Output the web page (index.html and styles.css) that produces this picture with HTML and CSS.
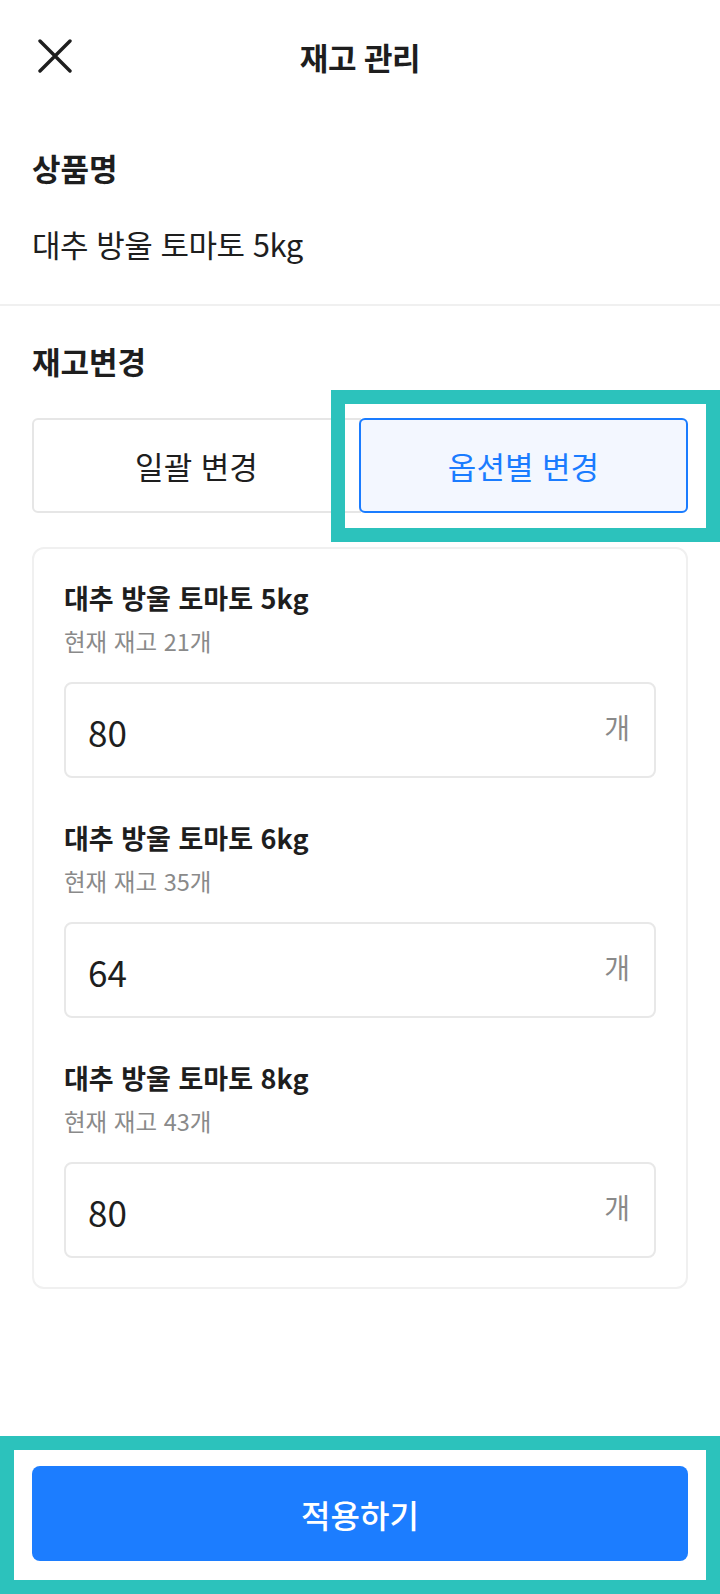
FILE: index.html
```html
<!doctype html>
<html lang="ko">
<head>
<meta charset="UTF-8">
<title>재고 관리</title>
<link rel="stylesheet" href="styles.css">
</head>
<body>
<div class="page">
	<header class="top">
		<span class="btn-close">
			<svg width="34" height="34" viewBox="0 0 34 34"><path d="M2 2L32 32M32 2L2 32" stroke="#1e1e1e" stroke-width="3.4" stroke-linecap="round" fill="none"/></svg>
		</span>
		<h1>재고 관리</h1>
		<span></span>
	</header>

	<section class="info">
		<h2>상품명</h2>
		<p class="name">대추 방울 토마토 5kg</p>
	</section>

	<section class="stock">
		<h2>재고변경</h2>
		<div class="tabs">
			<span class="tab">일괄 변경</span>
			<span class="tab on">옵션별 변경<i class="mark mark-tab"></i></span>
		</div>

		<div class="card">
			<div class="item">
				<h3>대추 방울 토마토 5kg</h3>
				<p class="now">현재 재고 21개</p>
				<label class="field"><input type="text" value="80"><span>개</span></label>
			</div>
			<div class="item">
				<h3>대추 방울 토마토 6kg</h3>
				<p class="now">현재 재고 35개</p>
				<label class="field"><input type="text" value="64"><span>개</span></label>
			</div>
			<div class="item">
				<h3>대추 방울 토마토 8kg</h3>
				<p class="now">현재 재고 43개</p>
				<label class="field"><input type="text" value="80"><span>개</span></label>
			</div>
		</div>
	</section>

	<footer class="bottom">
		<button class="btn-apply">적용하기</button>
		<i class="mark"></i>
	</footer>
</div>
</body>
</html>
```

FILE: styles.css
```css
*{ margin:0; padding:0; box-sizing:border-box;}
body{
	font-family:"Noto Sans CJK KR","Noto Sans",sans-serif;
	color:#1e1e1e;
	background:#fff;
}
.page{
	display:flex;
	flex-direction:column;
	width:720px;
	height:1594px;
}
/* 상단 */
.top{
	display:grid;
	grid-template-columns:1fr auto 1fr;
	align-items:center;
	height:112px;
	padding:0 38px;
}
.btn-close{
	display:flex;
	width:34px;
	height:34px;
	cursor:pointer;
}
.top h1{
	font-size:31px;
	font-weight:700;
	line-height:40px;
	letter-spacing:-0.5px;
	padding-top:1px;
}
h2{
	font-size:31px;
	font-weight:700;
	line-height:40px;
}
/* 상품명 */
.info{
	padding:36px 32px 40px;
	border-bottom:2px solid #f0f0f0;
}
.info .name{
	margin-top:36px;
	font-size:31px;
	line-height:40px;
	letter-spacing:-0.5px;
}
/* 재고변경 */
.stock{
	padding:35px 32px 0;
}
.tabs{
	display:flex;
	margin-top:37px;
}
.tab{
	position:relative;
	flex:1;
	display:flex;
	align-items:center;
	justify-content:center;
	height:95px;
	font-size:31px;
	border:2px solid #e6e6e6;
	border-radius:6px 0 0 6px;
	cursor:pointer;
}
.tab.on{
	color:#1a7cff;
	background:#f3f7ff;
	border-color:#1a7cff;
	border-radius:6px;
	margin-left:-2px;
}
.card{
	margin-top:34px;
	padding:31px 30px 29px;
	border:2px solid #f0f0f0;
	border-radius:12px;
}
.item + .item{
	margin-top:42px;
}
.item h3{
	font-size:27px;
	font-weight:700;
	line-height:36px;
}
.item .now{
	margin-top:10px;
	font-size:23.5px;
	line-height:30px;
	color:#8a8a8a;
}
.field{
	display:flex;
	align-items:center;
	height:96px;
	margin-top:26px;
	padding:0 24px 0 22px;
	border:2px solid #e8e8e8;
	border-radius:8px;
}
.field input{
	flex:1;
	min-width:0;
	border:none;
	outline:none;
	background:none;
	font-family:"Noto Sans CJK KR","Noto Sans",sans-serif;
	font-size:35px;
	color:#1e1e1e;
	padding-top:2px;
}
.field span{
	font-size:28px;
	color:#8a8a8a;
	padding-bottom:6px;
}
/* 하단 */
.bottom{
	position:relative;
	margin-top:auto;
	padding:30px 32px 33px;
}
.btn-apply{
	display:block;
	width:100%;
	height:95px;
	border:none;
	border-radius:8px;
	background:#1c7dff;
	color:#fff;
	font-family:"Noto Sans CJK KR","Noto Sans",sans-serif;
	font-size:32px;
	font-weight:500;
	cursor:pointer;
}
/* 강조 표시 */
.mark{
	position:absolute;
	top:0;
	right:0;
	bottom:0;
	left:0;
	border:14px solid #2cc2bc;
	pointer-events:none;
}
.mark-tab{
	top:-30px;
	right:-34px;
	bottom:-31px;
	left:-30px;
}
```
